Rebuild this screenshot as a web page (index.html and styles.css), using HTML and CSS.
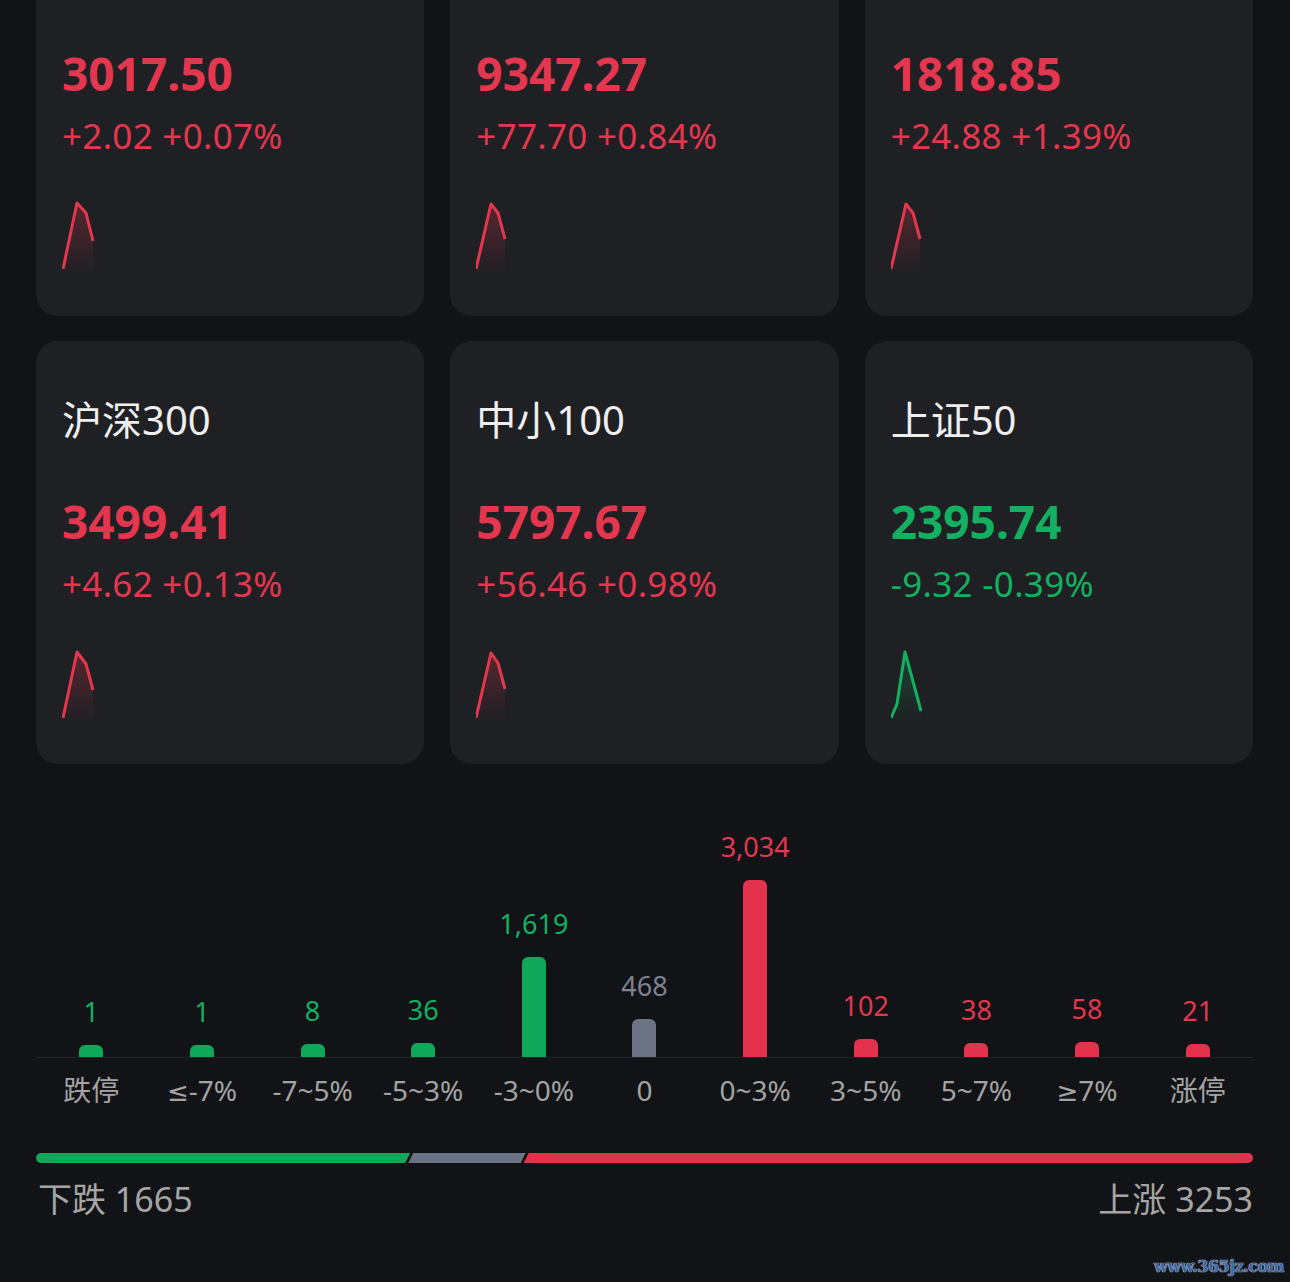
FILE: index.html
```html
<!DOCTYPE html>
<html lang="zh">
<head>
<meta charset="utf-8">
<link rel="stylesheet" href="styles.css">
</head>
<body>
<div class="page">
  <div class="cards">
    <div class="card">
      <div class="name"></div>
      <div class="price up">3017.50</div>
      <div class="chg up">+2.02 +0.07%</div>
      <svg class="spark" viewBox="0 0 40 80" width="40" height="80">
        <defs><linearGradient id="gr" x1="0" y1="0" x2="0" y2="1"><stop offset="0" stop-color="#e4364f" stop-opacity="0.28"/><stop offset="1" stop-color="#e4364f" stop-opacity="0"/></linearGradient></defs>
        <path d="M1 74 L15 8 L24 18 L31 46 L31 80 L1 80 Z" fill="url(#gr)"/>
        <path d="M1 74 L15 8 L24 18 L31 46" fill="none" stroke="#e4364f" stroke-width="3" stroke-linejoin="round"/>
      </svg>
    </div>
    <div class="card">
      <div class="name"></div>
      <div class="price up">9347.27</div>
      <div class="chg up">+77.70 +0.84%</div>
      <svg class="spark" viewBox="0 0 40 80" width="40" height="80">
        <path d="M0 74 L15 9 L22 18 L29 44 L29 80 L0 80 Z" fill="url(#gr)"/>
        <path d="M0 74 L15 9 L22 18 L29 44" fill="none" stroke="#e4364f" stroke-width="3" stroke-linejoin="round"/>
      </svg>
    </div>
    <div class="card">
      <div class="name"></div>
      <div class="price up">1818.85</div>
      <div class="chg up">+24.88 +1.39%</div>
      <svg class="spark" viewBox="0 0 40 80" width="40" height="80">
        <path d="M0 74 L15 9 L22 18 L29 44 L29 80 L0 80 Z" fill="url(#gr)"/>
        <path d="M0 74 L15 9 L22 18 L29 44" fill="none" stroke="#e4364f" stroke-width="3" stroke-linejoin="round"/>
      </svg>
    </div>
    <div class="card">
      <div class="name">沪深300</div>
      <div class="price up">3499.41</div>
      <div class="chg up">+4.62 +0.13%</div>
      <svg class="spark" viewBox="0 0 40 80" width="40" height="80">
        <path d="M1 75 L15 9 L24 21 L31 47 L31 80 L1 80 Z" fill="url(#gr)"/>
        <path d="M1 75 L15 9 L24 21 L31 47" fill="none" stroke="#e4364f" stroke-width="3" stroke-linejoin="round"/>
      </svg>
    </div>
    <div class="card">
      <div class="name">中小100</div>
      <div class="price up">5797.67</div>
      <div class="chg up">+56.46 +0.98%</div>
      <svg class="spark" viewBox="0 0 40 80" width="40" height="80">
        <path d="M0 75 L15 10 L22 20 L29 46 L29 80 L0 80 Z" fill="url(#gr)"/>
        <path d="M0 75 L15 10 L22 20 L29 46" fill="none" stroke="#e4364f" stroke-width="3" stroke-linejoin="round"/>
      </svg>
    </div>
    <div class="card">
      <div class="name">上证50</div>
      <div class="price down">2395.74</div>
      <div class="chg down">-9.32 -0.39%</div>
      <svg class="spark" viewBox="0 0 40 80" width="40" height="80">
        <defs><linearGradient id="gg" x1="0" y1="0" x2="0" y2="1"><stop offset="0" stop-color="#12b060" stop-opacity="0.25"/><stop offset="1" stop-color="#12b060" stop-opacity="0"/></linearGradient></defs>
        <path d="M0 75 L6 61 L14 9 L30 68 L30 80 L0 80 Z" fill="url(#gg)"/>
        <path d="M0 75 L6 61 L14 9 L30 68" fill="none" stroke="#12b060" stroke-width="3" stroke-linejoin="round"/>
      </svg>
    </div>
  </div>

  <div class="chart">
    <div class="plot">
      <div class="col"><span class="val g">1</span><div class="bar bg" style="height:12px"></div></div>
      <div class="col"><span class="val g">1</span><div class="bar bg" style="height:12px"></div></div>
      <div class="col"><span class="val g">8</span><div class="bar bg" style="height:13px"></div></div>
      <div class="col"><span class="val g">36</span><div class="bar bg" style="height:14px"></div></div>
      <div class="col"><span class="val g">1,619</span><div class="bar bg" style="height:100px"></div></div>
      <div class="col"><span class="val n">468</span><div class="bar bn" style="height:38px"></div></div>
      <div class="col"><span class="val r">3,034</span><div class="bar br" style="height:177px"></div></div>
      <div class="col"><span class="val r">102</span><div class="bar br" style="height:18px"></div></div>
      <div class="col"><span class="val r">38</span><div class="bar br" style="height:14px"></div></div>
      <div class="col"><span class="val r">58</span><div class="bar br" style="height:15px"></div></div>
      <div class="col"><span class="val r">21</span><div class="bar br" style="height:13px"></div></div>
    </div>
    <div class="axis">
      <span>跌停</span><span><b class="sym">≤</b>-7%</span><span>-7~5%</span><span>-5~3%</span><span>-3~0%</span><span>0</span><span>0~3%</span><span>3~5%</span><span>5~7%</span><span><b class="sym">≥</b>7%</span><span>涨停</span>
    </div>
  </div>

  <div class="ratio">
    <div class="seg seg-down" style="flex-grow:373"></div>
    <div class="seg seg-flat" style="flex-grow:117"></div>
    <div class="seg seg-up" style="flex-grow:727"></div>
  </div>
  <div class="totals">
    <span>下跌 1665</span>
    <span>上涨 3253</span>
  </div>
</div>
<div class="watermark">www.365jz.com</div>
</body>
</html>
```

FILE: styles.css
```css
html, body {
  margin: 0;
  padding: 0;
  background: #121316;
  height: 100%;
  overflow: hidden;
}
body {
  font-family: "Noto Sans", "Noto Sans CJK SC", sans-serif;
  color: #e8e8e8;
  position: relative;
}
.page {
  padding: 0 37px 0 36px;
}
.cards {
  display: grid;
  grid-template-columns: repeat(3, 1fr);
  column-gap: 26px;
  row-gap: 25px;
  margin-top: -107px;
}
.card {
  background: #1f2023;
  border-radius: 22px;
  height: 423px;
  box-sizing: border-box;
  padding: 55px 26px 0;
  display: flex;
  flex-direction: column;
  align-items: flex-start;
}
.name {
  font-size: 40px;
  line-height: 48px;
  height: 48px;
  color: #efefef;
}
.price {
  font-size: 46px;
  line-height: 56px;
  font-weight: 700;
  margin-top: 49px;
}
.chg {
  font-size: 35px;
  line-height: 44px;
  margin-top: 13px;
  letter-spacing: 0.3px;
}
.up { color: #e4364f; }
.down { color: #12b060; }
.spark {
  display: block;
  margin-top: 37px;
}

.chart {
  margin-top: 43px;
}
.plot {
  display: grid;
  grid-template-columns: repeat(11, 1fr);
  height: 250px;
  border-bottom: 1px solid #222326;
}
.col {
  display: flex;
  flex-direction: column;
  align-items: center;
  justify-content: flex-end;
}
.val {
  font-size: 27px;
  line-height: 30px;
  margin-bottom: 18px;
}
.val.g { color: #12b060; }
.val.r { color: #e4364f; }
.val.n { color: #7b8291; }
.bar {
  width: 24px;
  border-radius: 6px 6px 0 0;
}
.bg { background: #0fa85a; }
.br { background: #e4314c; }
.bn { background: #6b7384; }
.axis {
  display: grid;
  grid-template-columns: repeat(11, 1fr);
  margin-top: 14px;
  text-align: center;
  font-size: 28px;
  line-height: 36px;
  color: #a3a3a3;
}
.sym {
  font-family: "DejaVu Sans", sans-serif;
  font-weight: 400;
  font-size: 26px;
}

.ratio {
  display: flex;
  height: 10px;
  margin-top: 43px;
}
.seg {
  flex-basis: 0;
  height: 100%;
}
.seg-down {
  background: #0fa85a;
  border-radius: 5px 0 0 5px;
  clip-path: polygon(0 0, 100% 0, calc(100% - 5px) 100%, 0 100%);
}
.seg-flat {
  background: #6b7384;
  margin-left: -2px;
  clip-path: polygon(5px 0, 100% 0, calc(100% - 5px) 100%, 0 100%);
}
.seg-up {
  background: #e4314c;
  margin-left: -2px;
  border-radius: 0 5px 5px 0;
  clip-path: polygon(5px 0, 100% 0, 100% 100%, 0 100%);
}
.totals {
  display: flex;
  justify-content: space-between;
  margin-top: 16px;
  font-size: 34px;
  line-height: 40px;
  color: #a5a5a5;
  padding-left: 2px;
}

.watermark {
  position: absolute;
  right: 6px;
  bottom: 6px;
  font-family: "DejaVu Serif", serif;
  font-weight: 700;
  font-size: 16px;
  color: #3766a3;
  text-shadow: 0 0 1px #dfe8f5, 0 0 1px #dfe8f5;
  letter-spacing: -0.5px;
}
```
